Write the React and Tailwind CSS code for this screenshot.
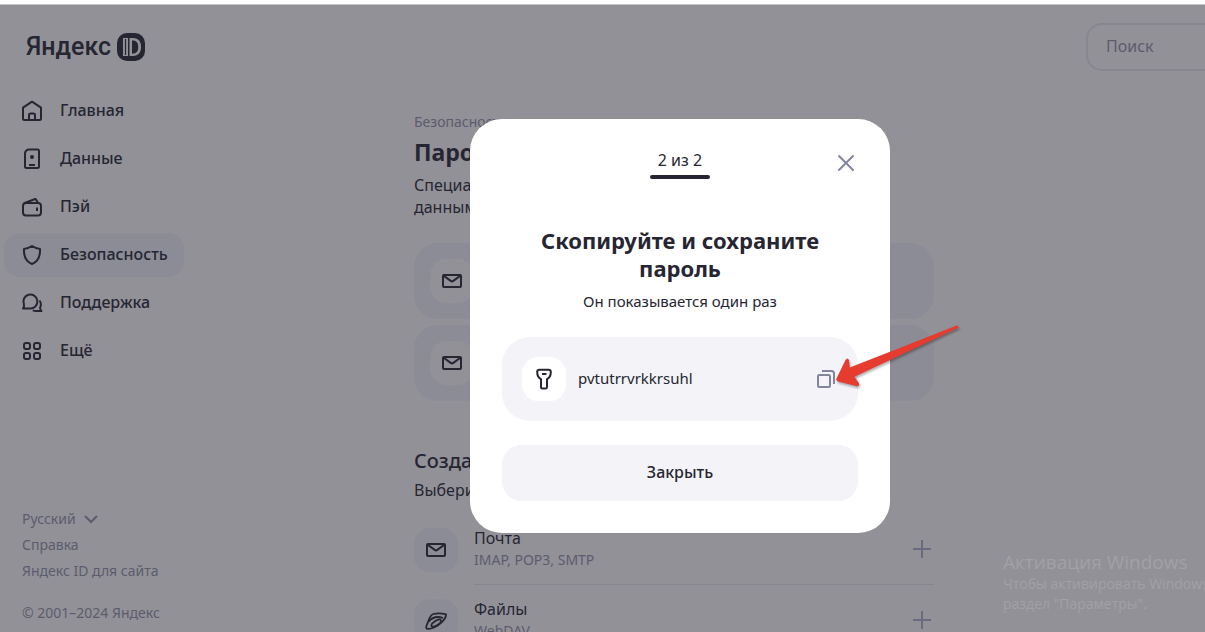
import React, { useState } from 'react';

const iconProps = {
  width: 24,
  height: 24,
  viewBox: '0 0 24 24',
  fill: 'none',
  stroke: 'currentColor',
  strokeWidth: 2,
  strokeLinejoin: 'round',
  'aria-hidden': true,
};

function HomeIcon() {
  return (
    <svg {...iconProps}>
      <path d="M3 8.700 12 2.700l9 6V19.500a1.500 1.500 0 0 1-1.500 1.500h-15A1.500 1.500 0 0 1 3 19.500z" />
      <path d="M9 21V16a1.500 1.500 0 0 1 1.500-1.500h3A1.500 1.500 0 0 1 15 16v5" />
    </svg>
  );
}

function DataIcon() {
  return (
    <svg {...iconProps}>
      <path d="M9 2.500h8.500A1.500 1.500 0 0 1 19 4v15.500a1.500 1.500 0 0 1-1.500 1.500h-11A1.500 1.500 0 0 1 5 19.500v-13a4 4 0 0 1 4-4z" />
      <circle cx="12" cy="10" r="2" fill="currentColor" stroke="none" />
      <path d="M9 18h6" />
    </svg>
  );
}

function PayIcon() {
  return (
    <svg {...iconProps}>
      <rect x="3" y="8" width="18" height="12.500" rx="3" />
      <path d="M4 8.200 14.500 4.200a1.500 1.500 0 0 1 1.800.8L18 8" />
      <path d="M17 12.500v3.500" />
    </svg>
  );
}

function ShieldIcon() {
  return (
    <svg {...iconProps}>
      <path d="M12 3c2.500 1.700 5 2.600 8 3 .4 7-2 12.500-8 15C6 18.500 3.600 13 4 6c3-.4 5.500-1.300 8-3z" />
    </svg>
  );
}

function SupportIcon() {
  return (
    <svg {...iconProps}>
      <path d="M3 17.500h7.500a7 7 0 1 0-6.600-4.300c.4 1.300.1 2.800-.9 4.300z" />
      <path d="M19.500 9.500c1.700 2.400 1.700 5 .6 7.200 0 1.300.4 2.300 1.400 3.300h-5c-1.300 0-2.500-.1-3.700-.6" />
    </svg>
  );
}

function MoreIcon() {
  return (
    <svg {...iconProps}>
      <rect x="4" y="4" width="6" height="6" rx="2" />
      <rect x="14" y="4" width="6" height="6" rx="2" />
      <rect x="4" y="14" width="6" height="6" rx="2" />
      <rect x="14" y="14" width="6" height="6" rx="2" />
    </svg>
  );
}

function MailIcon() {
  return (
    <svg {...iconProps}>
      <rect x="3" y="6" width="18" height="12" rx="1" />
      <path d="m4 7 6.700 4.900a2.200 2.200 0 0 0 2.600 0L20 7" />
    </svg>
  );
}

function FilesIcon() {
  return (
    <svg {...iconProps} strokeWidth="1.800">
      <path d="M9.500 5c4-1 8.500-.8 12.500.3.300 4.700-6 10.500-12 13.200-4 1.800-7.500 2-7.800.3-.2-2 1.300-4.300 2.300-7C5.700 8.600 6.500 5.800 9.500 5z" />
      <path d="M4.300 13C8 8.500 13.500 7 19 9" />
      <ellipse cx="12.200" cy="14.200" rx="5.500" ry="2.200" transform="rotate(-33 12.200 14.200)" />
    </svg>
  );
}

function PlusIcon() {
  return (
    <svg {...iconProps}>
      <path d="M12 3v18M3 12h18" />
    </svg>
  );
}

function CloseIcon() {
  return (
    <svg {...iconProps} strokeLinecap="round">
      <path d="m5 5 14 14M19 5 5 19" />
    </svg>
  );
}

function KeyIcon() {
  return (
    <svg {...iconProps}>
      <path d="M7.500 2.800h9a2.300 2.300 0 0 1 2.300 2.300c0 3-.8 5.700-3.800 7V20a1.500 1.500 0 0 1-1.500 1.500h-3A1.500 1.500 0 0 1 9 20v-7.900c-3-1.300-3.800-4-3.800-7a2.300 2.300 0 0 1 2.300-2.300z" />
      <path d="M10 7h4.500" />
    </svg>
  );
}

function CopyIcon() {
  return (
    <svg {...iconProps}>
      <rect x="4" y="8" width="12" height="12" rx="1.500" />
      <path d="M8 4h9.500A2.500 2.500 0 0 1 20 6.500V17" />
    </svg>
  );
}

function Logo() {
  return (
    <a href="#home" className="flex items-center gap-[6px] text-[#262633]" aria-label="Яндекс ID">
      <span className="font-['Roboto',sans-serif] text-[25px] leading-7 font-medium">Яндекс</span>
      <svg width="28" height="28" viewBox="0 0 28 28" aria-hidden="true">
        <rect width="28" height="28" rx="10" fill="#262633" />
        <rect x="6" y="5" width="5" height="18" fill="#929197" />
        <path d="M8.500 6v16" stroke="#262633" strokeWidth="1.200" />
        <path d="M12.500 5h3.500c5.500 0 8 3.500 8 9s-2.500 9-8 9h-3.500z" fill="#929197" />
        <path d="M15 7.500h1c3.600 0 5.200 2.300 5.200 6.500s-1.600 6.500-5.200 6.500h-1z" fill="#262633" />
      </svg>
    </a>
  );
}

const navItems = [
  { label: 'Главная', icon: HomeIcon },
  { label: 'Данные', icon: DataIcon },
  { label: 'Пэй', icon: PayIcon },
  { label: 'Безопасность', icon: ShieldIcon, active: true },
  { label: 'Поддержка', icon: SupportIcon },
  { label: 'Ещё', icon: MoreIcon },
];

function Sidebar() {
  return (
    <aside className="flex w-48 shrink-0 flex-col pt-[18px] pb-[9px]">
      <nav className="flex flex-col gap-1 pr-2 pl-1">
        {navItems.map(({ label, icon: Icon, active }) => (
          <a
            key={label}
            href="#nav"
            className={`flex h-11 items-center gap-4 rounded-2xl px-4 text-base font-medium ${
              active ? 'bg-[#8b8c96]' : ''
            }`}
          >
            <Icon />
            <span className="pb-[2px]">{label}</span>
          </a>
        ))}
      </nav>

      <footer className="mt-auto flex flex-col items-start gap-[6px] pl-[22px] text-sm leading-5 text-[#5c5c6e]">
        <div className="relative">
          <select aria-label="Язык" className="appearance-none pr-[22px]">
            <option>Русский</option>
          </select>
          <svg
            className="pointer-events-none absolute top-[6px] right-0"
            width="14"
            height="9"
            viewBox="0 0 14 9"
            fill="none"
            stroke="currentColor"
            strokeWidth="2"
            aria-hidden="true"
          >
            <path d="m1 1 6 6 6-6" />
          </svg>
        </div>
        <a href="#help">Справка</a>
        <a href="#site">Яндекс ID для сайта</a>
        <div className="mt-4">© 2001–2024 Яндекс</div>
      </footer>
    </aside>
  );
}

const services = [
  { name: 'Почта', hint: 'IMAP, POP3, SMTP', icon: MailIcon },
  { name: 'Файлы', hint: 'WebDAV', icon: FilesIcon },
];

function PasswordsPage() {
  return (
    <main className="min-w-0 flex-1 pt-[43px] pr-[49px]">
      <div className="mx-auto max-w-[520px]">
        <a href="#security" className="block text-sm leading-4 text-[#5c5c6e]">Безопасность</a>
        <h1 className="mt-2 text-[23px] leading-7 font-bold">Пароли приложений</h1>
        <p className="mt-2 text-base leading-[22px]">
          Специальные пароли для доступа к вашим
          <br />
          данным в сторонних приложениях
        </p>

        <div className="mt-[25px] flex flex-col gap-[6px]">
          {[1, 2].map((id) => (
            <div key={id} className="rounded-3xl bg-[#8b8c96] p-4">
              <div className="flex size-11 items-center justify-center rounded-2xl bg-[#929197]">
                <MailIcon />
              </div>
            </div>
          ))}
        </div>

        <h2 className="mt-[46px] text-xl leading-7 font-medium">Создать пароль приложения</h2>
        <p className="mt-1 text-base leading-[22px]">Выберите тип приложения</p>

        <ul className="mt-[13px]">
          {services.map(({ name, hint, icon: Icon }) => (
            <li key={name} className="flex items-center gap-4">
              <div className="flex size-11 items-center justify-center rounded-2xl bg-[#8b8c96]">
                <Icon />
              </div>
              <div className="flex flex-1 items-center justify-between border-b border-[#86868e] py-[13px]">
                <div>
                  <div className="text-base leading-[22px]">{name}</div>
                  <div className="text-sm leading-[22px] text-[#5c5c6e]">{hint}</div>
                </div>
                <button type="button" aria-label="Создать" className="text-[#696a80]">
                  <PlusIcon />
                </button>
              </div>
            </li>
          ))}
        </ul>
      </div>
    </main>
  );
}

function Arrow() {
  return (
    <svg
      className="pointer-events-none absolute top-[200px] left-[360px] drop-shadow-[1px_2px_1px_rgba(0,0,0,0.3)]"
      width="136"
      height="76"
      viewBox="0 0 136 76"
      aria-hidden="true"
    >
      <path
        d="M6.500 59.500 15.500 41q2-3 3.500 0l.8 7.500L126.500 6.600q2.500 0 2.200 2L24.500 57.700l4.300 6.300q1.200 3-1.800 3.200L8 62.500q-2.500-1-1.500-3z"
        fill="#e63c30"
      />
    </svg>
  );
}

function PasswordDialog({ onClose }) {
  return (
    <div className="fixed inset-0 flex items-center justify-center pt-5 pl-[155px]">
      <div
        role="dialog"
        aria-labelledby="dialog-title"
        className="relative w-[420px] rounded-[32px] bg-white px-8 pt-[30px] pb-8 text-center"
      >
        <button
          type="button"
          aria-label="Закрыть окно"
          onClick={onClose}
          className="absolute top-8 right-8 text-[#83859f]"
        >
          <CloseIcon />
        </button>

        <div className="text-base leading-[22px]">2 из 2</div>
        <div className="mx-auto mt-1 h-1 w-[60px] rounded-full bg-[#262633]" />

        <h2 id="dialog-title" className="mt-[47px] text-[22px] leading-7 font-bold">
          Скопируйте и сохраните
          <br />
          пароль
        </h2>
        <p className="mt-2 text-[15px] leading-[22px]">Он показывается один раз</p>

        <div className="mt-[25px] flex items-center gap-3 rounded-[28px] bg-[#f3f3f8] p-5">
          <div className="flex size-11 items-center justify-center rounded-2xl bg-white">
            <KeyIcon />
          </div>
          <span className="pb-[2px] text-[15px]">pvtutrrvrkkrsuhl</span>
          <button type="button" aria-label="Скопировать" className="ml-auto text-[#83859f]">
            <CopyIcon />
          </button>
        </div>

        <button
          type="button"
          onClick={onClose}
          className="mt-6 h-14 w-full rounded-[20px] bg-[#f3f3f8] pb-[2px] text-base font-medium"
        >
          Закрыть
        </button>

        <Arrow />
      </div>
    </div>
  );
}

export default function App() {
  const [open, setOpen] = useState(true);

  return (
    <div className="relative flex h-screen flex-col overflow-hidden border-t-4 border-white bg-[#929197] font-['Noto_Sans',sans-serif] text-[#262633]">
      <header className="flex shrink-0 items-start justify-between border-t border-[#c4c4c8] pt-[18px] pl-[26px]">
        <div className="pt-[10px]">
          <Logo />
        </div>
        <input
          type="search"
          aria-label="Поиск"
          placeholder="Поиск"
          className="h-12 w-[119px] rounded-l-2xl border-2 border-r-0 border-[#86878f] pb-[2px] pl-[18px] text-base placeholder:text-[#5c5c6e]"
        />
      </header>

      <div className="flex min-h-0 flex-1">
        <Sidebar />
        <PasswordsPage />
      </div>

      {/* System activation notice */}
      <div className="absolute right-0 bottom-[18px] w-[202px] overflow-hidden font-['Open_Sans',sans-serif] text-sm leading-5 whitespace-nowrap text-[#a1a1a6]">
        <div className="text-[19px] leading-6">Активация Windows</div>
        <div>Чтобы активировать Windows, перейдите в</div>
        <div>раздел "Параметры".</div>
      </div>

      {open && <PasswordDialog onClose={() => setOpen(false)} />}
    </div>
  );
}
